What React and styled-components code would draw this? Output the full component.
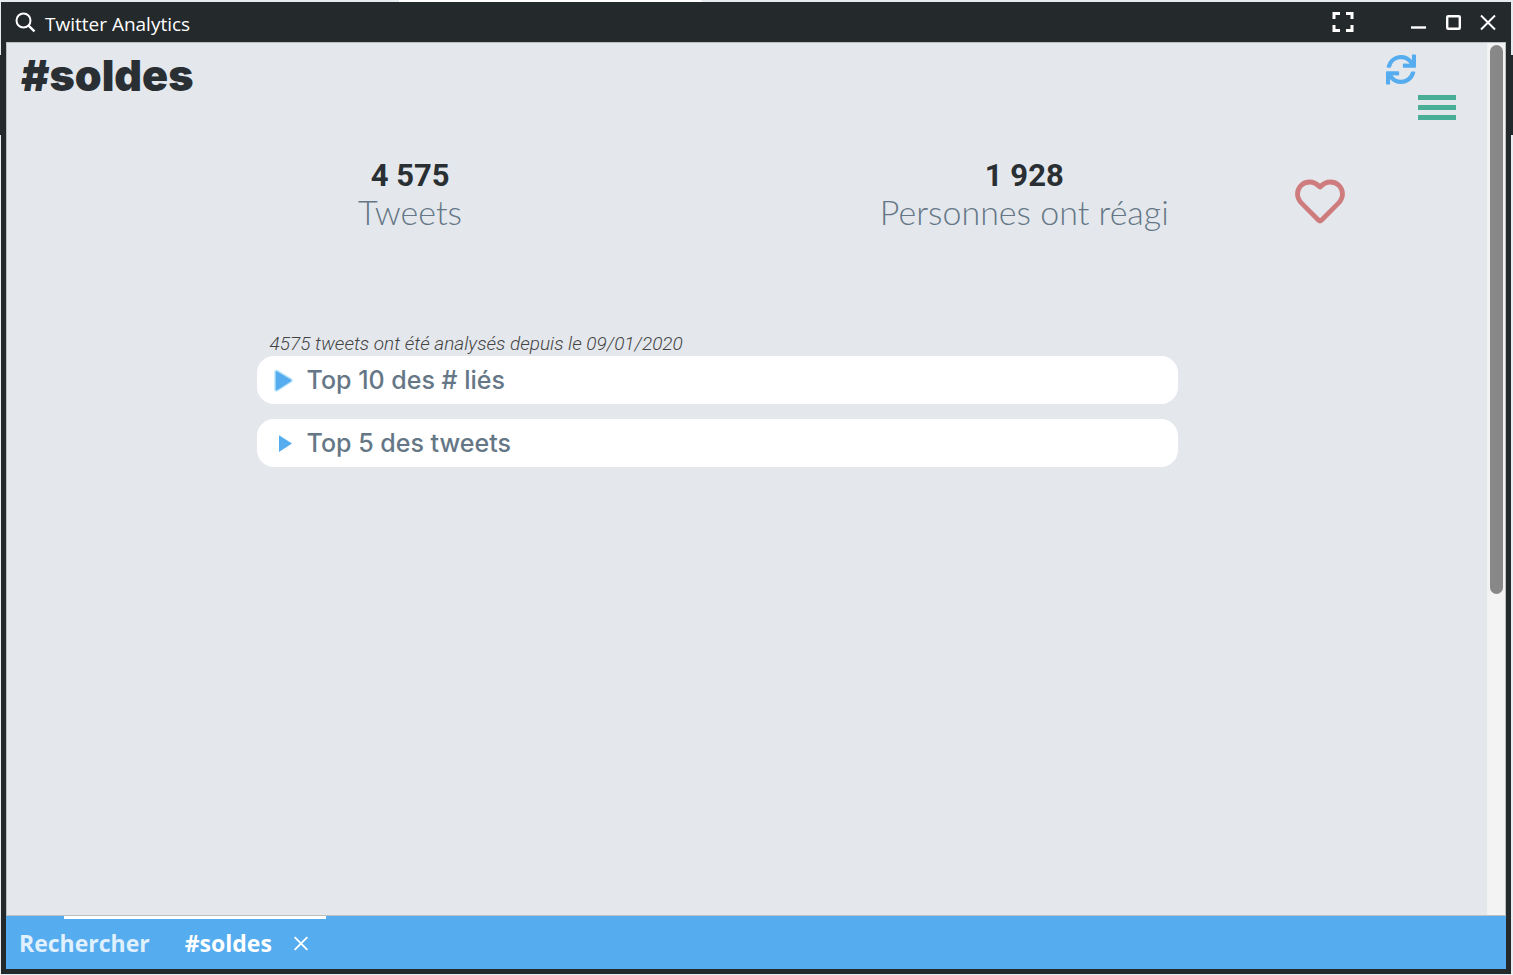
import React from "react";
import styled, { createGlobalStyle } from "styled-components";
import { FaSync } from "react-icons/fa";

const INK = "#24292c";
const BLUE = "#55acee";
const SLATE = "#657786";
const UI = '"Open Sans", "Noto Sans", sans-serif';
const DISPLAY = 'Lato, "Open Sans", sans-serif';
const HEADING = 'Inter, "Open Sans", sans-serif';

const GlobalStyle = createGlobalStyle`
  * { box-sizing: border-box; }
  body {
    margin: 0;
    background: linear-gradient(#e6ebef 55px, ${INK} 55px, ${INK} 135px, #e9edf1 135px);
    font-family: ${UI};
  }
  button { border: 0; padding: 0; background: none; color: inherit; font: inherit; cursor: pointer; }
  h1, h2, p { margin: 0; }
`;

const Desktop = styled.div`
  height: 100vh;
  padding: 2px 2px 1px 1px;
  display: flex;
  background: linear-gradient(#fff, #fff) 33% 0 / 20% 2px no-repeat;
`;

const Window = styled.section`
  flex: 1;
  min-width: 0;
  display: flex;
  flex-direction: column;
  padding: 0 5px 5px;
  background: ${INK};
`;

const TitleBar = styled.header`
  height: 40px;
  display: flex;
  align-items: center;
  gap: 9px;
  padding: 0 7px 0 8px;
  color: #fff;
`;

const WindowTitle = styled.span`
  flex: 1;
  font-size: 19px;
  line-height: 28px;
  padding-top: 4px;
`;

const WindowControls = styled.div`
  display: flex;
  align-items: center;
  gap: 13px;
`;

const IconButton = styled.button`
  display: flex;
  align-items: center;
  justify-content: center;
  width: ${(p) => p.$size}px;
  height: ${(p) => p.$size}px;
  color: ${(p) => p.$color || "inherit"};
`;

const FullscreenSlot = styled.div`
  margin-right: 40px;
`;

const Viewport = styled.div`
  flex: 1;
  min-height: 0;
  display: flex;
  background: #e4e8ec;
  border: 1px solid #bcbfc0;
`;

const Page = styled.main`
  flex: 1;
  min-width: 0;
  background: #e4e8ed;
`;

const ScrollTrack = styled.div`
  width: 18px;
  padding: 2px 2px 2px 3px;
  background: #f3f3f3;
`;

const ScrollThumb = styled.div`
  width: 13px;
  height: 63.2%;
  border-radius: 7px;
  background: #888;
`;

const PageHeader = styled.div`
  display: flex;
  justify-content: space-between;
  height: 112px;
  padding: 5px 31px 0 14px;
`;

const PageTitle = styled.h1`
  font: 900 43px/54px ${HEADING};
  color: #292f33;
`;

const PageActions = styled.div`
  display: flex;
  flex-direction: column;
  width: 70px;
  padding-top: 6px;
  align-items: flex-start;
`;

const MenuButton = styled.button`
  align-self: flex-end;
  display: flex;
  flex-direction: column;
  justify-content: space-between;
  width: 38px;
  height: 25px;
  margin-top: 11px;
`;

const MenuLine = styled.span`
  width: 100%;
  height: 5px;
  background: #48ae96;
`;

const Report = styled.div`
  width: 83%;
  margin-left: 96px;
`;

const Stats = styled.div`
  position: relative;
  display: grid;
  grid-template-columns: 1fr 1fr;
  height: 177px;
  padding-top: 2px;
  text-align: center;
`;

const Stat = styled.div`
  display: flex;
  flex-direction: column;
`;

const StatValue = styled.strong`
  font: 700 31px/38px Roboto, sans-serif;
  color: #292f33;
`;

const StatLabel = styled.span`
  font: 300 34px/34px ${DISPLAY};
  color: ${SLATE};
`;

const LikeButton = styled(IconButton)`
  position: absolute;
  right: -15px;
  top: 21px;
`;

const Details = styled.div`
  width: 75%;
  margin: 0 auto;
  display: flex;
  flex-direction: column;
  gap: 15px;
`;

const Summary = styled.p`
  margin-bottom: -15px;
  padding-left: 13px;
  font: italic 300 19px/24px Roboto, sans-serif;
  color: #444;
`;

const Panel = styled.button`
  display: flex;
  align-items: center;
  gap: 11px;
  width: 100%;
  height: 48px;
  padding: 0 15px;
  border-radius: 17px;
  background: #fff;
  text-align: left;
`;

const PanelTitle = styled.span`
  font: 500 25px/32px ${HEADING};
  color: ${SLATE};
`;

const TabBar = styled.nav`
  display: flex;
  align-items: flex-start;
  height: 53px;
  background: ${BLUE};
  color: #fff;
`;

const TabGroup = styled.div`
  position: relative;
  display: flex;
  align-items: center;
  height: 53px;
  gap: ${(p) => p.$gap || 0}px;
  padding-left: ${(p) => p.$inset}px;
`;

const Tab = styled.button`
  font-size: 23px;
  line-height: 32px;
  font-weight: 700;
  color: ${(p) => (p.$active ? "#fff" : "#e0f0fd")};
`;

const TabMarker = styled.span`
  position: absolute;
  top: 0;
  right: -15px;
  width: 262px;
  height: 3px;
  background: #fff;
`;

const SearchIcon = () => (
  <svg width="22" height="22" viewBox="0 0 22 22" fill="none" stroke="#fff" strokeWidth="2">
    <circle cx="9.5" cy="9.5" r="7" />
    <path d="M14.3 14.3 20.5 20.3" strokeWidth="2.4" />
  </svg>
);

const FullscreenIcon = () => (
  <svg width="22" height="20" viewBox="0 0 22 20" fill="none" stroke="#fff" strokeWidth="3">
    <path d="M2 7V1.5H8M14 1.5H20V7M20 13V18.5H14M8 18.5H2V13" />
  </svg>
);

const MinimizeIcon = () => (
  <svg width="22" height="22" viewBox="0 0 22 22">
    <path d="M4 16.5H19" stroke="#fff" strokeWidth="2.4" />
  </svg>
);

const MaximizeIcon = () => (
  <svg width="22" height="22" viewBox="0 0 22 22">
    <rect x="5.2" y="5.2" width="12.6" height="12.6" rx="1" fill="none" stroke="#fff" strokeWidth="2.4" />
  </svg>
);

const CloseIcon = () => (
  <svg width="22" height="22" viewBox="0 0 22 22">
    <path d="M4 4.5 18 18.5M18 4.5 4 18.5" stroke="#fff" strokeWidth="2" />
  </svg>
);

const HeartIcon = () => (
  <svg width="52" height="46" viewBox="0 0 52 46">
    <path
      d="M26 8C22 3.8 19 3 15.5 3C8.5 3 3.5 8.5 3.5 15C3.5 19 5.2 21.8 8 24.6L24.6 41.3Q26 42.7 27.4 41.3L44 24.6C46.8 21.8 48.5 19 48.5 15C48.5 8.5 43.5 3 36.5 3C33 3 30 3.8 26 8Z"
      fill="none"
      stroke="#ce7c7d"
      strokeWidth="4.8"
      strokeLinejoin="round"
    />
  </svg>
);

const Arrow = ({ glowing }) => (
  <svg width="24" height="24" viewBox="0 0 24 24">
    {glowing ? (
      <>
        <path d="M4.5 4 18.5 12.5 4.5 21.5Z" fill="none" stroke="#b5e2fa" strokeWidth="4.4" strokeLinejoin="round" />
        <path d="M4.5 4 18.5 12.5 4.5 21.5Z" fill={BLUE} stroke={BLUE} strokeWidth="1.6" strokeLinejoin="round" />
      </>
    ) : (
      <path d="M7 4.3 20 12.6 7 21Z" fill={BLUE} />
    )}
  </svg>
);

export default function App() {
  return (
    <Desktop>
      <GlobalStyle />
      <Window>
        <TitleBar>
          <SearchIcon />
          <WindowTitle>Twitter Analytics</WindowTitle>
          <WindowControls>
            <FullscreenSlot>
              <IconButton $size={22} aria-label="Plein écran"><FullscreenIcon /></IconButton>
            </FullscreenSlot>
            <IconButton $size={22} aria-label="Réduire"><MinimizeIcon /></IconButton>
            <IconButton $size={22} aria-label="Agrandir"><MaximizeIcon /></IconButton>
            <IconButton $size={22} aria-label="Fermer"><CloseIcon /></IconButton>
          </WindowControls>
        </TitleBar>
        <Viewport>
          <Page>
            <PageHeader>
              <PageTitle>#soldes</PageTitle>
              <PageActions>
                <IconButton $size={30} $color={BLUE} aria-label="Actualiser"><FaSync size={31} /></IconButton>
                <MenuButton aria-label="Menu">
                  <MenuLine />
                  <MenuLine />
                  <MenuLine />
                </MenuButton>
              </PageActions>
            </PageHeader>
            <Report>
              <Stats>
                <Stat>
                  <StatValue>4 575</StatValue>
                  <StatLabel>Tweets</StatLabel>
                </Stat>
                <Stat>
                  <StatValue>1 928</StatValue>
                  <StatLabel>Personnes ont réagi</StatLabel>
                </Stat>
                <LikeButton $size={52} aria-label="Aimer"><HeartIcon /></LikeButton>
              </Stats>
              <Details>
                <Summary>4575 tweets ont été analysés depuis le 09/01/2020</Summary>
                <Panel aria-expanded="false">
                  <Arrow glowing />
                  <PanelTitle>Top 10 des # liés</PanelTitle>
                </Panel>
                <Panel aria-expanded="false">
                  <Arrow />
                  <PanelTitle>Top 5 des tweets</PanelTitle>
                </Panel>
              </Details>
            </Report>
          </Page>
          <ScrollTrack>
            <ScrollThumb />
          </ScrollTrack>
        </Viewport>
        <TabBar>
          <TabGroup $inset={13}>
            <Tab>Rechercher</Tab>
          </TabGroup>
          <TabGroup $inset={35} $gap={19}>
            <TabMarker />
            <Tab $active>#soldes</Tab>
            <IconButton $size={20} aria-label="Fermer l’onglet"><CloseIcon /></IconButton>
          </TabGroup>
        </TabBar>
      </Window>
    </Desktop>
  );
}
